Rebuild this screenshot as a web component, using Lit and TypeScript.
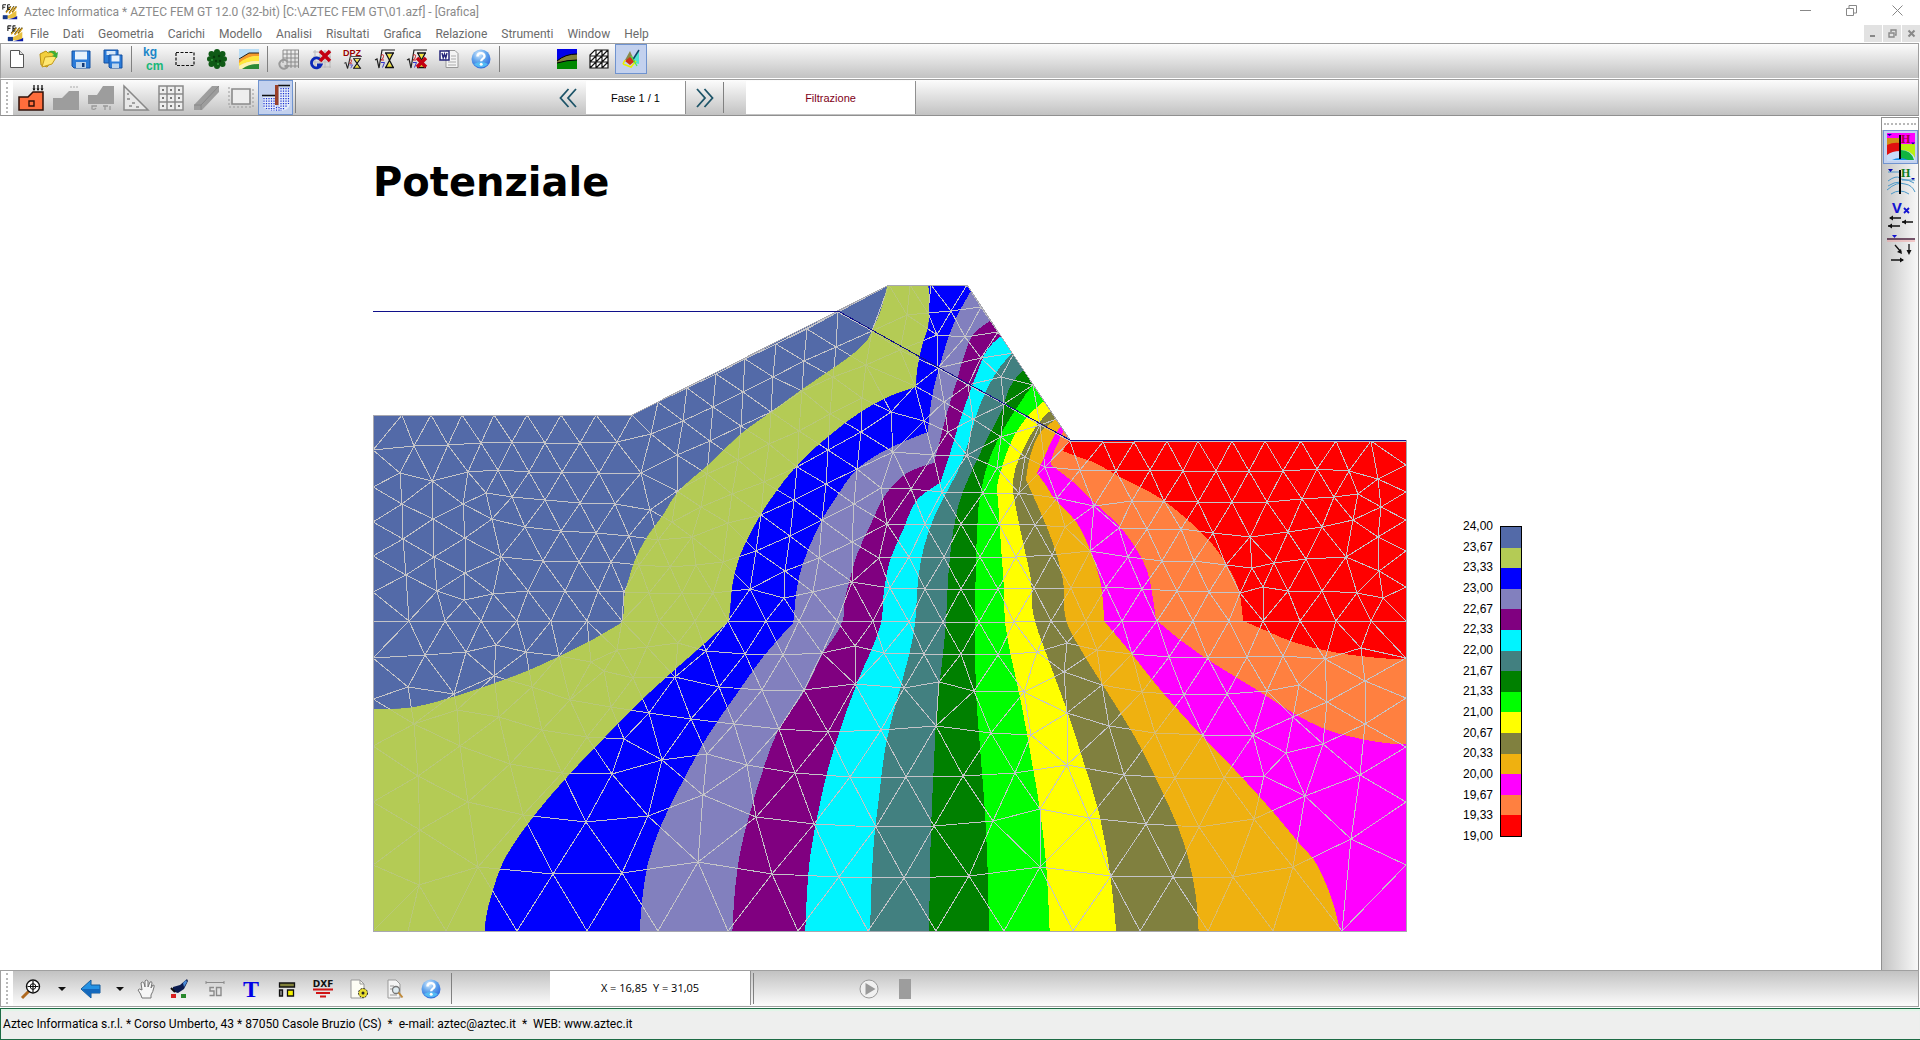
import { LitElement, html, svg, css, TemplateResult } from "lit";
import { customElement, property } from "lit/decorators.js";

type Pt = [number, number];

/* ---------- model data ---------- */

const COLORS = [
  "#536aa8", "#b4cb55", "#0000fe", "#8280be", "#800080", "#00f4ff", "#428080", "#008000",
  "#00ff00", "#ffff00", "#80803f", "#efb110", "#ff00ff", "#ff8040", "#ff0000",
];

const LEVELS = [
  "24,00", "23,67", "23,33", "23,00", "22,67", "22,33", "22,00", "21,67",
  "21,33", "21,00", "20,67", "20,33", "20,00", "19,67", "19,33", "19,00",
];

const DOMAIN: Pt[] = [
  [373, 415], [632, 415], [889, 285], [967, 285], [1070, 440], [1406, 440], [1406, 931], [373, 931],
];

const pairs = (s: string): Pt[] =>
  s.trim().split(/\s+/).map((p) => p.split(",").map(Number) as unknown as Pt);

/* Iso-lines of the potential, from the highest level to the lowest. */
const ISO: Pt[][] = [
  "889,280 887,287 882,307 873,329 866,342 849,357 835,367 804,388 771,412 742,433 708,465 677,493 663,515 647,537 635,560 628,582 625,592 623,618 621,623 592,640 560,656 527,671 495,683 453,697 415,707 392,709 365,709",
  "928,280 928,327 923,342 917,370 916,387 890,396 862,411 830,435 799,463 770,500 752,530 739,558 732,587 729,618 728,622 705,643 650,692 605,737 567,777 533,817 503,862 492,893 486,917 484,940",
  "976,282 971,291 960,310 950,333 940,365 934,387 930,410 928,432 903,442 880,453 854,472 839,493 823,518 808,550 799,577 795,603 794,617 793,623 763,657 738,692 707,737 685,777 662,823 648,863 643,893 639,940",
  "998,317 990,321 973,335 965,353 957,380 947,413 940,440 934,463 907,473 886,494 870,526 856,557 849,583 844,603 843,620 822,655 805,690 777,733 763,770 748,820 740,853 735,890 732,940",
  "1010,332 1000,337 987,350 977,373 967,400 957,430 947,463 940,483 917,500 903,530 890,560 884,590 881,623 857,683 840,730 827,773 818,813 810,857 807,893 805,940",
  "1022,346 1013,353 1000,367 988,387 977,413 967,447 957,473 944,497 933,520 924,547 918,580 916,613 913,637 903,678 892,718 885,750 879,797 874,840 871,897 870,940",
  "1032,362 1023,370 1010,387 1002,410 988,437 977,460 966,484 958,507 951,547 947,597 946,623 942,663 937,707 934,763 931,830 929,940",
  "1043,378 1033,385 1020,403 1003,430 993,450 985,473 979,503 976,563 975,623 976,693 980,747 985,813 988,880 989,940",
  "1052,394 1043,402 1027,417 1012,440 1002,467 997,487 998,500 1001,547 1004,590 1005,623 1014,670 1022,707 1031,757 1040,810 1046,863 1050,940",
  "1058,404 1049,412 1037,425 1023,450 1015,470 1013,490 1015,503 1024,547 1031,580 1033,613 1046,653 1067,710 1083,760 1099,813 1110,873 1117,940",
  "1064,413 1055,420 1040,433 1030,457 1026,480 1036,502 1053,543 1063,580 1066,620 1081,650 1106,690 1135,737 1160,787 1178,827 1188,857 1196,897 1199,940",
  "1067,420 1060,427 1052,440 1043,460 1037,473 1047,487 1053,497 1077,523 1090,550 1100,580 1103,602 1104,621 1131,653 1163,693 1203,737 1235,770 1274,813 1299,843 1314,860 1323,877 1333,903 1342,940",
  "1069,424 1064,430 1058,443 1052,457 1051,465 1073,482 1095,503 1120,527 1135,547 1147,570 1152,593 1156,620 1183,642 1213,663 1257,690 1293,713 1327,730 1357,738 1385,743 1420,745",
  "1072,436 1066,445 1063,451 1073,455 1093,462 1108,470 1120,477 1160,498 1190,522 1213,545 1228,567 1238,587 1242,610 1243,621 1260,628 1293,642 1333,652 1360,656 1393,659 1420,659",
].map(pairs);

const SHEETS: { at: Pt; scale: Pt; nodes: string }[] = [
  {
    at: [360, 270], scale: [2.904, 3],
    nodes: `38,436 123,436 207,436 297,436 389,436 485,436 585,436 684,436 790,436
      865,397 951,353 1034,312 1117,268 1207,222 1297,176 1389,126 1535,46
      38,541 157,528 255,526 350,520 440,516 536,518 638,520 745,516 846,492 937,453 1026,410 1113,367 1200,321 1290,273 1383,230 1488,182
      38,650 116,609 210,632 313,606 400,600 490,605 588,607 693,609 816,610 921,556 1015,512 1107,468 1193,425 1283,362 1375,320 1469,285
      38,757 123,702 298,703 365,668 440,680 536,690 639,698 740,703 843,719 920,662 1007,612 1097,570 1187,523 1275,483 1365,432 1458,385
      905,757 991,712 1080,672 1172,635 1270,590 1360,540 1454,487 1541,427
      1165,735 1260,690 1352,643 1443,597 1549,546 1249,798 1343,750 1434,703 1514,654
      1151,842 1235,903 1333,865 1430,815 1529,762 1132,957 1230,985 1315,967 1428,937 1508,865
      212,748 382,748 480,770 585,782 684,790 782,797 866,810 965,800 1070,760
      38,858 126,806 305,803 410,860 530,872 635,875 728,875 810,885 900,890 975,885 1055,875
      38,965 133,914 215,860 225,963 305,910 303,990 385,973 487,964 594,964 690,962 766,965 840,968 935,970 1025,970
      38,1054 143,1054 248,1054 350,1054 455,1054 556,1054 660,1054 762,1054 868,1054 972,1054 1069,1054 1180,1054 1276,1054 1386,1054 1490,1054`,
  },
  {
    at: [860, 270], scale: [3, 3],
    nodes: `150,46 213,46 322,46 363,112 413,185 462,250 520,345 590,448 631,512
      272,122 140,135 205,128 230,196 315,200 120,240 235,293 362,265 325,345 165,348
      422,322 433,402 340,448 253,397 192,452 91,425 3,488 265,485 422,500 322,556 220,555 100,548
      65,652 152,658 245,666 370,668 412,595 478,668 495,562 540,465 555,590 660,600 768,603 728,515 822,515`,
  },
  {
    at: [1040, 420], scale: [3, 3],
    nodes: `187,62 280,62 380,62 475,62 576,62 676,62 782,62 887,62 993,62 1098,62
      14,140 123,150 228,155 329,150 428,152 528,153 628,153 730,152 832,148 928,152 1015,177 1098,135 1098,215
      955,223 882,230 785,238 682,246 577,247 475,245 372,243 275,243 163,258 50,235
      1022,260 1098,300 940,300 845,322 743,335 630,352 520,338 422,328 322,328 237,323 75,320
      1015,350 1098,392 918,410 798,417 703,428 636,445 558,435 463,424 366,424 263,412 150,392 37,405
      1018,452 1098,500 1030,535 950,520 845,512 745,512 670,502 600,518 508,515 410,512 305,508 198,502 93,505
      32,604 137,604 246,604 352,604 458,604 568,604 670,604 780,604 887,604 993,604 1098,604
      80,670 170,690 275,703 388,710 505,715 620,712 730,707 854,717 962,685 1098,713
      974,783 862,847 776,795 680,813 560,823 432,825 305,815 187,795 72,757
      82,880 208,918 345,940 490,945 638,945 758,890 974,912 1098,835`,
  },
  {
    at: [860, 480], scale: [2.8, 3],
    nodes: `74,130 183,132 284,133 390,133 490,135 575,135 52,235 137,230 236,230 335,230 437,230 535,228 643,212
      85,323 183,328 284,328 386,328 487,325 587,322 690,322
      35,425 137,425 233,425 333,425 432,425 534,425 630,425 732,425
      68,518 178,522 284,522 386,525 495,515 578,490 122,625 222,605 320,632 458,635 572,577 680,610 790,632
      58,750 213,737 367,758 480,765 580,695 700,740 830,765 963,765 1100,767 1193,820 1295,793 1212,715 1415,735
      1530,800 1400,885 1530,965 1245,948 1130,888 1020,895 882,895 738,885 580,855 433,878 288,887 130,892
      45,1042 208,1037 372,1022 505,988 640,1015 800,1032 950,1040 1103,1018 1375,1077 1530,1155 1212,1160
      1045,1190 875,1192 703,1187 503,1160 304,1187 122,1195
      23,1353 212,1353 402,1353 597,1353 785,1353 975,1353 1155,1353 1350,1353 1529,1353`,
  },
  {
    at: [360, 600], scale: [3, 3],
    nodes: `40,175 40,297 40,437 40,605 40,795 40,993
      195,165 317,155 408,135 497,155 598,168 693,185 770,150 862,140 955,130 1037,153 1155,163 1270,165 1387,158 1485,137
      143,260 282,282 403,228 515,262 630,300 732,213 820,235 946,232 1078,260 1205,270 1333,270 1485,253
      163,372 290,330 418,350 547,390 680,412 752,322 868,340 993,357 1123,373 1258,388 1405,395
      300,437 450,493 793,418 907,480 1042,462 1160,495 1305,520 1470,532 757,523 605,520
      175,527 325,605 490,645 678,665 865,647 1030,585 1187,650 1362,672 1545,682
      180,690 355,800 578,822 785,820 1015,787 1235,822 1437,832 178,855
      145,993 258,993 470,993 682,993 895,993 1105,993 1315,993`,
  },
];

/* ---------- geometry ---------- */

function collectNodes(): Pt[] {
  const out: Pt[] = [];
  for (const s of SHEETS) {
    for (const [u, v] of pairs(s.nodes)) {
      const p: Pt = [Math.round(s.at[0] + u / s.scale[0]), Math.round(s.at[1] + v / s.scale[1])];
      if (!out.some((q) => Math.hypot(q[0] - p[0], q[1] - p[1]) < 9)) out.push(p);
    }
  }
  return out;
}

function inside(p: Pt, poly: Pt[]): boolean {
  let hit = false;
  for (let i = 0, j = poly.length - 1; i < poly.length; j = i++) {
    const [xi, yi] = poly[i];
    const [xj, yj] = poly[j];
    if (yi > p[1] !== yj > p[1] && p[0] < ((xj - xi) * (p[1] - yi)) / (yj - yi) + xi) hit = !hit;
  }
  return hit;
}

interface Tri { a: number; b: number; c: number; x: number; y: number; r: number; }

/* Incremental Delaunay triangulation; returns the unique edges inside the domain. */
function meshPath(nodes: Pt[]): string {
  const pts: Pt[] = [...nodes, [-20000, -15000], [22000, -15000], [900, 30000]];
  const n = nodes.length;
  const make = (a: number, b: number, c: number): Tri | null => {
    const [ax, ay] = pts[a], [bx, by] = pts[b], [cx, cy] = pts[c];
    const d = 2 * (ax * (by - cy) + bx * (cy - ay) + cx * (ay - by));
    if (Math.abs(d) < 1e-9) return null;
    const a2 = ax * ax + ay * ay, b2 = bx * bx + by * by, c2 = cx * cx + cy * cy;
    const x = (a2 * (by - cy) + b2 * (cy - ay) + c2 * (ay - by)) / d;
    const y = (a2 * (cx - bx) + b2 * (ax - cx) + c2 * (bx - ax)) / d;
    return { a, b, c, x, y, r: (ax - x) ** 2 + (ay - y) ** 2 };
  };
  let tris: Tri[] = [make(n, n + 1, n + 2)!];
  for (let i = 0; i < n; i++) {
    const [px, py] = pts[i];
    const edges = new Map<string, [number, number, number]>();
    const keep: Tri[] = [];
    for (const t of tris) {
      if ((px - t.x) ** 2 + (py - t.y) ** 2 < t.r - 1e-6) {
        for (const [u, v] of [[t.a, t.b], [t.b, t.c], [t.c, t.a]]) {
          const k = u < v ? `${u}_${v}` : `${v}_${u}`;
          const e = edges.get(k);
          if (e) e[2]++;
          else edges.set(k, [u, v, 1]);
        }
      } else keep.push(t);
    }
    edges.forEach(([u, v, c]) => {
      if (c === 1) {
        const t = make(u, v, i);
        if (t) keep.push(t);
      }
    });
    tris = keep;
  }
  const seen = new Set<string>();
  let d = "";
  for (const t of tris) {
    if (t.a >= n || t.b >= n || t.c >= n) continue;
    const c: Pt = [
      (pts[t.a][0] + pts[t.b][0] + pts[t.c][0]) / 3,
      (pts[t.a][1] + pts[t.b][1] + pts[t.c][1]) / 3,
    ];
    if (!inside(c, DOMAIN)) continue;
    for (const [u, v] of [[t.a, t.b], [t.b, t.c], [t.c, t.a]]) {
      const k = u < v ? `${u}_${v}` : `${v}_${u}`;
      if (seen.has(k)) continue;
      seen.add(k);
      d += `M${pts[u].join(" ")}L${pts[v].join(" ")}`;
    }
  }
  return d;
}

/* Smooth curve through the points; sharp corners stay sharp. */
function curve(p: Pt[], start: "M" | "L"): string {
  const tangent = p.map((q, i): Pt => {
    if (i === 0 || i === p.length - 1) return [0, 0];
    const a: Pt = [q[0] - p[i - 1][0], q[1] - p[i - 1][1]];
    const b: Pt = [p[i + 1][0] - q[0], p[i + 1][1] - q[1]];
    const la = Math.hypot(...a), lb = Math.hypot(...b);
    const cos = (a[0] * b[0] + a[1] * b[1]) / (la * lb);
    if (cos < 0.86) return [0, 0];
    const w: Pt = [a[0] / la + b[0] / lb, a[1] / la + b[1] / lb];
    const lw = Math.hypot(...w);
    return [w[0] / lw, w[1] / lw];
  });
  let d = `${start}${p[0].join(" ")}`;
  for (let i = 1; i < p.length; i++) {
    const k = Math.hypot(p[i][0] - p[i - 1][0], p[i][1] - p[i - 1][1]) / 3;
    const c = [
      p[i - 1][0] + tangent[i - 1][0] * k, p[i - 1][1] + tangent[i - 1][1] * k,
      p[i][0] - tangent[i][0] * k, p[i][1] - tangent[i][1] * k,
    ].map((v) => v.toFixed(1));
    d += `C${c.join(" ")} ${p[i].join(" ")}`;
  }
  return d;
}

const MESH = meshPath(collectNodes());
const DOMAIN_POINTS = DOMAIN.map((q) => q.join(",")).join(" ");
const downstream = (i: number): string => {
  const line = ISO[i];
  const tail = i === 0 ? "L365 945L1450 945" : `L1450 ${line[line.length - 1][1]}`;
  return `${curve(line, "M")}${tail}L1450 270Z`;
};
const band = (i: number): string =>
  `${curve(ISO[i - 1], "M")}${i === 1 ? "L365 940" : ""}${curve([...ISO[i]].reverse(), "L")}Z`;

/* ---------- icons ---------- */

const helpIcon = svg`
  <defs><radialGradient id="hb" cx=".4" cy=".25" r=".8"><stop offset="0" stop-color="#d6ecff"/><stop offset=".5" stop-color="#5fa3ec"/><stop offset="1" stop-color="#2a62d8"/></radialGradient></defs>
  <circle cx="10" cy="10" r="9.5" fill="url(#hb)"/><path d="M3 15a9 9 0 0 0 14 0q-7-4-14 0z" fill="#58c8f8" opacity=".8"/>
  <path d="M6.500 7.500C6.500 3 13.500 3 13.500 7.300C13.500 9.800 10.200 9.500 10.200 12.300" fill="none" stroke="#fff" stroke-width="2.400"/><circle cx="10.200" cy="15.300" r="1.500" fill="#fff"/>`;

const sqrtGlass = svg`
  <path d="M0 11l2-1 2 9L7 1h13" fill="none" stroke="#222" stroke-width="1.200"/>
  <path d="M12 5h5l-2.500 5zM11.500 18h6l-3-5z" fill="#efe23a"/>
  <path d="M10 4h9M10 18.500h9M11 4.500l7 13.500M18 4.500L11 18" stroke="#111" stroke-width="1.300" fill="none"/>
  <path d="M6 6.500q3-2 2.500 1T6 11h3" fill="none" stroke="#c22" stroke-width="1"/><path d="M6 13.500h3.500l-2 5" fill="none" stroke="#33c" stroke-width="1"/>`;

const redX = svg`<path d="M9 2l10 10M19 2L9 12" stroke="#c40010" stroke-width="3.500" fill="none"/>`;

const ICONS: Record<string, TemplateResult> = {
  app: svg`<path d="M1 16q8-1 17-8v10H1z" fill="#e8c040"/><path d="M5 10L11 3M9 11L15 3M13 10L18 3" stroke="#3a3008" stroke-width="1.600"/><path d="M5 11L11 4M9 12L15 4M13 11L18 4" stroke="#e0a820" stroke-width="1.400"/>
    <path d="M7 19q8-1 12-4v4z" fill="#0a1aa8"/><path d="M1 19v-5h6v5z" fill="#183a8a"/><path d="M1 1v6M1 1h4M1 4h3M7 1v6M7 1h3M7 4h2M7 7h3" stroke="#222" stroke-width="1.300" fill="none"/>`,
  fresh: svg`<path d="M3.500 1.500h9l4 4v13h-13z" fill="#fff" stroke="#555"/><path d="M12.500 1.500v4h4" fill="#ddd" stroke="#555"/>`,
  open: svg`<path d="M1 5l6-3 2 2 7-2 1 5-9 11-6-2z" fill="#f3cf3c" stroke="#b98f12"/><path d="M6 8l12-1-5 8-10 3z" fill="#ffe873" stroke="#c39a1c"/><path d="M9 3q5-3 8 1l2-1-1 6-5-2 2-1q-2-3-6-3z" fill="#3fae36"/>`,
  save: svg`<path d="M1 2h18v17H3l-2-2z" fill="#2b7bd8" stroke="#1550a0"/><path d="M4 2.500h12v8H4z" fill="#e8f2fc"/><path d="M5 13h10v6H5z" fill="#bcd4ec"/><path d="M11 14h2.500v4H11z" fill="#123a78"/>`,
  saveAll: svg`<path d="M1 1h14v13H1z" fill="#2b7bd8" stroke="#1550a0"/><path d="M3.500 2h9v4h-9z" fill="#d8e8f8"/><path d="M6 6h13v13H7l-1-1z" fill="#2b7bd8" stroke="#1550a0"/><path d="M8.500 6.500h8v6h-8z" fill="#e8f2fc"/><path d="M9 14.500h7V19H9z" fill="#bcd4ec"/>`,
  units: svg`<text x="0" y="7" font-size="12" font-weight="700" font-family="Liberation Sans" fill="#1c86c8">kg</text><text x="3" y="21" font-size="12" font-weight="700" font-family="Liberation Sans" fill="#18b878">cm</text>`,
  select: svg`<path d="M1 3.500h18v13H1z" fill="none" stroke="#111" stroke-dasharray="3 1.500" stroke-width="1.200"/>`,
  tree: svg`<g fill="#0f5a16"><circle cx="10" cy="10" r="7"/><circle cx="10" cy="3" r="3"/><circle cx="4.500" cy="5" r="3"/><circle cx="15.500" cy="5" r="3"/><circle cx="2.800" cy="10" r="2.800"/><circle cx="17.200" cy="10" r="2.800"/><circle cx="4.500" cy="15" r="3"/><circle cx="15.500" cy="15" r="3"/><circle cx="10" cy="17" r="3"/></g><g fill="#083a0c"><circle cx="7" cy="8" r="1.200"/><circle cx="12" cy="7" r="1.200"/><circle cx="9" cy="12" r="1.200"/><circle cx="13" cy="12" r="1.200"/></g><circle cx="5" cy="11" r="1" fill="#38a040"/><circle cx="11" cy="15" r="1" fill="#38a040"/>`,
  strata: svg`<path d="M0 0h20v5H9L0 11z" fill="#b8dcf4"/><path d="M0 11l5-4 5-3h10v3q-10-1-20 8z" fill="#f49a2c"/><path d="M0 14Q9 6 20 7v5Q8 12 0 17z" fill="#ffe63c"/><path d="M0 17q8-5 20-5v3q-10 0-16 5H0z" fill="#fff2b0"/><path d="M3 20q7-5 17-5v5z" fill="#2c8a34"/><path d="M0 10l5-3 5-3h10" stroke="#222" fill="none"/>`,
  gridOff: svg`<path d="M4 1v13M8 1v18M12 1v18M16 1v18M19.500 1v18M4 1h16M4 5h16M4 9h16M8 13h12M8 17h12" stroke="#8a8a8a" fill="none"/><path d="M8.500 12.500A4.500 4.500 0 1 0 9 17H5.500" stroke="#999" stroke-width="2" fill="none"/>`,
  gridDel: svg`<path d="M4 1v18M9 1v18M14 1v18M19 1v18M2 3h18M2 8h18M2 13h18M2 18h18" stroke="#bbb" fill="none"/><path d="M9.500 11A5 5 0 1 0 10 16H6" stroke="#0a28b8" stroke-width="2.800" fill="none"/>${redX}`,
  dpz: svg`<text x="0" y="6.500" font-size="9" font-weight="700" font-family="Liberation Sans" fill="#900">DPZ</text><g transform="translate(1 7) scale(.9 .66)">${sqrtGlass}</g>`,
  sqrt: sqrtGlass,
  sqrtDel: svg`${sqrtGlass}<path d="M10 9l9 9M19 9l-9 9" stroke="#c40010" stroke-width="3.500"/>`,
  word: svg`<path d="M7 1.500h9l3 3v14H7z" fill="#f4f4f4" stroke="#999"/><path d="M12 7h5M12 10h5M9 13h8M9 16h8" stroke="#aaa"/><path d="M1 2h9v9H1z" fill="#fff" stroke="#24247a" stroke-width="1.500"/><path d="M3 4l1.200 5L5.500 5l1.300 4L8 4" stroke="#24247a" stroke-width="1.400" fill="none"/>`,
  help: helpIcon,
  layers: svg`<path d="M0 0h20v20H0z" fill="#0000e8"/><path d="M0 12Q8 5 20 5v6Q10 11 0 14z" fill="#80803a"/><path d="M0 14q10-3 20-3v9H0z" fill="#008800"/><path d="M0 12Q8 5 20 5M0 14q10-3 20-3" stroke="#000" fill="none"/>`,
  mesh: svg`<path d="M6 1h13v18H1V6z" fill="#fff"/><path d="M6 1h13v18H1V6zM7 1v18M13 1v18M1 7h18M1 13h18M1 13l6-6 6-6M1 19l6-6 6-6 6-6M7 19l6-6 6-6M13 19l6-6" fill="none" stroke="#111" stroke-width="1.200"/>`,
  results: svg`<path d="M9 2l4 9H4z" fill="#8a8a4a"/><path d="M18 1L9 13l9 2z" fill="#30e8c8" opacity=".8"/><path d="M18 1l-7 11" stroke="#146" stroke-width="1.500"/><path d="M4 12l5-4 5 4-5 4z" fill="#d23018"/><path d="M2 15l8 3 5-6M4 11l-2 4" stroke="#e8f000" stroke-width="1.600" fill="none"/><path d="M10 7l6 10" stroke="#48e848" stroke-width="1.200"/>`,
  loads: svg`<path d="M1 25V12h9l5-5h10v18z" fill="#ff6d3c" stroke="#301008" stroke-width="1.500"/><path d="M11 16h5v5h-5z" fill="none" stroke="#301008" stroke-width="1.400"/><path d="M16 0v5M20 0v5M24 0v5" stroke="#111" stroke-width="1.300"/><path d="M14.500 3.500h3L16 6zM18.500 3.500h3L20 6zM22.500 3.500h3L24 6z" fill="#111"/>`,
  profile: svg`<path d="M0 25V13h9l7-7h10v19z" fill="#9d9d9d"/><path d="M17 2h9" stroke="#aaa" stroke-dasharray="2 1"/>`,
  profile2: svg`<path d="M0 19V10h9l6-9h11v18z" fill="#9d9d9d"/><path d="M9 21H4v3q3 1 4-1M20 21h-5M17 21v4M22 21v4" stroke="#999" fill="none" stroke-width="1.300"/>`,
  wedge: svg`<path d="M1 1l24 24H1z" fill="#e8e8e8" stroke="#888" stroke-width="1.500"/><path d="M4 14h3M9 18h3M6 21h3M13 22h3M4 9h2" stroke="#888" stroke-width="1.500"/>`,
  blocks: svg`<path d="M1 1h24v24H1zM9 1v24M17 1v24M1 9h24M1 17h24" fill="#eee" stroke="#8a8a8a" stroke-width="1.500"/><path d="M4 4h2v2H4zM12 4h2v2h-2zM20 4h2v2h-2zM4 12h2v2H4zM12 12h2v2h-2zM20 12h2v2h-2zM4 20h2v2H4zM12 20h2v2h-2zM20 20h2v2h-2z" fill="#777"/>`,
  beam: svg`<path d="M1 20L19 1h7v6L9 25H1z" fill="#9d9d9d"/><path d="M1 20h7l18-19M8 20v5" stroke="#888" fill="none"/>`,
  frame: svg`<path d="M4 4h18v15H4z" fill="#eee" stroke="#8a8a8a" stroke-width="1.600"/><path d="M1 2v20h24V2" fill="none" stroke="#999" stroke-dasharray="2 2"/>`,
  seepage: svg`<path d="M1 13v10q4 4 12 4h3q10 0 12-6V4H17v19h-3V13z" fill="#e4ecfa"/>
    <path d="M2 14v9M4.500 14v11M7 14v12M9.500 14v13M12 14v13M14.500 23v5M17 23v5M19 4v23M21.500 4v22M24 4v20M26.500 4v16" stroke="#1a2fd0" stroke-width="1.200" stroke-dasharray="1.300 1.200"/>
    <path d="M0 11.500h13M16 1.500h12" stroke="#111" stroke-width="1.600"/><path d="M13 1h3.500v20H13z" fill="#9a4028"/>`,
  zoom: svg`<path d="M1 19l7-7" stroke="#b06a20" stroke-width="3"/><circle cx="12" cy="7.500" r="6.500" fill="#fff" stroke="#111" stroke-width="1.400"/><path d="M12 2v11M6.500 7.500h11" stroke="#111" stroke-width="1.200"/><circle cx="12" cy="7.500" r="2.800" fill="none" stroke="#111"/>`,
  back: svg`<path d="M0 10L10 1v5h9v8h-9v5z" fill="#2492e4" stroke="#155a9a"/><path d="M10 10h9v4h-9v5L1 10z" fill="#1468bc"/>`,
  hand: svg`<path d="M5 19Q4 15 1 11q1-2 4 0L4 4q1-2 3 0l1 4V2q1-2 3 0v6l2-5q2-1 2 1l-1 5 2-3q2 0 1 2-1 5-3 8v3z" fill="#f6f6f6" stroke="#777"/>`,
  redraw: svg`<path d="M4 8l7-2L18 0l1 2-4 8-6 4q-6-1-5-6z" fill="#0c1c50"/><path d="M14 4l3-3 1 2-3 5z" fill="#4a8ad8"/><path d="M2 15h5v4H2z" fill="#d82020"/><path d="M12 15h5v4h-5z" fill="#28882c"/><path d="M2 9l4 4" stroke="#111" stroke-width="2"/>`,
  size50: svg`<path d="M1 3.500h18M1 2v3M19 2v3" stroke="#8a8a8a"/><path d="M9 8.500H5v3.500h4v4.500H4.500M11.500 8.500H16v8h-4.500z" fill="none" stroke="#8a8a8a" stroke-width="1.400"/>`,
  type: svg`<text x="10" y="18" text-anchor="middle" font-size="24" font-weight="700" font-family="Liberation Serif" fill="#0000e6">T</text>`,
  sections: svg`<path d="M2.500 4h15v4h-15z" fill="#80803a" stroke="#111" stroke-width="1.300"/><path d="M2.500 11h3v6h-3z" fill="#888" stroke="#111" stroke-width="1.300"/><path d="M10.500 11h6v6h-6z" fill="#f4f000" stroke="#111" stroke-width="1.300"/>`,
  dxf: svg`<text x="10" y="7.500" text-anchor="middle" font-size="9" font-weight="700" font-family="DejaVu Sans" fill="#111">DXF</text><path d="M0 10.500h20M3 14h14M7 17.500h6" stroke="#d01414" stroke-width="2"/>`,
  page: svg`<path d="M2 1h9l4 4v14H2z" fill="#fdfdf4" stroke="#999"/><path d="M11 1v4h4" fill="none" stroke="#999"/><circle cx="14" cy="14" r="4.500" fill="#e8dc30" stroke="#222" stroke-dasharray="2 1"/><circle cx="14" cy="14" r="1.500" fill="#222"/>`,
  preview: svg`<path d="M3 1h8l4 4v14H3z" fill="#f4f4f4" stroke="#999"/><path d="M5 7h4M5 10h3M5 16h7" stroke="#999"/><circle cx="11" cy="11" r="3.500" fill="#ddeaf0" stroke="#777" stroke-width="1.300"/><path d="M13.500 13.500l4 5" stroke="#c08a3a" stroke-width="2"/>`,
  play: svg`<circle cx="10" cy="10" r="9" fill="#f0f0f0" stroke="#999"/><path d="M6.500 4v12l10-6z" fill="#999"/>`,
  stop: svg`<path d="M4 0h12v20H4z" fill="#9d9d9d"/>`,
  prev: svg`<path d="M9.500 1l-8 9 8 9M17 1l-8 9 8 9" fill="none" stroke="#1d5468" stroke-width="1.800"/>`,
  next: svg`<path d="M3 1l8 9-8 9M10.500 1l8 9-8 9" fill="none" stroke="#1d5468" stroke-width="1.800"/>`,
  fieldH: svg`<path d="M0 0h28v28H0z" fill="#c8dcf8"/><path d="M0 0h28v11H0z" fill="#ff00ff"/><path d="M0 5h13v7Q5 12 0 16z" fill="#d09018"/><path d="M0 12q6-3 13-2v8q-8 0-13 4z" fill="#e01010"/><path d="M14 11h14v14q-4-8-14-8z" fill="#b8f010"/><path d="M14 17q10 0 13 10H14z" fill="#10b440"/><path d="M5 27q8-4 16 0z" fill="#1890e8"/><path d="M13 2v24" stroke="#000" stroke-width="2"/><text x="14" y="10" font-size="12" font-weight="700" font-family="Liberation Serif" fill="#a00040">H</text><path d="M0 1h5L2.500 3zM24 9.500h4l-2 2z" fill="#00a"/>`,
  isoH: svg`<path d="M1 5h12M15 13h13M1 14q8-6 12-3M14 12q9 1 13 4M0 23q10-9 18-6 7 1 10 8M4 27q9-6 18 0M1 19q6-4 12-4" fill="none" stroke="#4a98c8"/><path d="M13 3v24" stroke="#000" stroke-width="2"/><text x="14" y="10" font-size="12" font-weight="700" font-family="Liberation Serif" fill="#0a7a1a">H</text><path d="M1 2h5L3.500 5zM24 11h4l-2 2z" fill="#00a"/>`,
  velX: svg`<text x="5" y="12" font-size="15" font-weight="700" font-family="Open Sans" fill="#1414d0">V</text><path d="M17 7l5 5M22 7l-5 5" stroke="#1414d0" stroke-width="1.800"/><path d="M3 17h11M15 21h11M1 25h12" stroke="#111" stroke-width="1.300"/><path d="M2 17l4-2.500v5zM15 21l4-2.500v5zM1 25l4-2.500v5z" fill="#111"/>`,
  velV: svg`<path d="M5 0h5L7.500 3z" fill="#1414d0"/><path d="M0 4h28" stroke="#401030" stroke-width="1.400"/><path d="M0 6h28" stroke="#f0a0a0"/><path d="M8 10l6 7M22 9v9M4 25h12" stroke="#111" stroke-width="1.300"/><path d="M15 19l-5-2 4-3zM19.500 15h5L22 20zM17 25l-4-2.500v5z" fill="#111"/>`,
};

@customElement("tool-button")
class ToolButton extends LitElement {
  @property() icon = "";
  @property() label = "";
  @property({ type: Number }) size = 20;
  @property({ type: Boolean }) active = false;

  static styles = css`
    :host { display: flex; }
    .btn { display: flex; flex: 1; align-items: center; justify-content: center; margin: 0; padding: 0; border: 1px solid transparent; background: none; }
    .btn.on { border-color: #6f93cf; background: #c3d1ee; }
    .pic { display: block; overflow: visible; }
  `;

  render() {
    return html`<button class="btn ${this.active ? "on" : ""}" aria-label=${this.label} aria-pressed=${this.active}>
      <svg class="pic" width=${this.size} height=${this.size} viewBox="0 0 ${this.size} ${this.size}" aria-hidden="true">${ICONS[this.icon]}</svg>
    </button>`;
  }
}

@customElement("potential-plot")
class PotentialPlot extends LitElement {
  static styles = css`
    :host { display: block; }
    .plot { display: block; width: 100%; height: auto; overflow: visible; }
    .mesh { fill: none; stroke: #c4c4c8; stroke-width: 1; shape-rendering: crispEdges; }
    .water { fill: none; stroke: #10108a; stroke-width: 1; shape-rendering: crispEdges; }
    .edge { fill: none; stroke: #a8a8b0; stroke-width: 1; shape-rendering: crispEdges; }
  `;

  render() {
    return html`<svg class="plot" viewBox="373 285 1034 647" role="img" aria-label="Potenziale">
      <defs><clipPath id="soil"><polygon points=${DOMAIN_POINTS}></polygon></clipPath></defs>
      <g clip-path="url(#soil)">
        <polygon points=${DOMAIN_POINTS} fill=${COLORS[0]}></polygon>
        <g shape-rendering="crispEdges">${ISO.map((_, i) => svg`<path d=${downstream(i)} fill=${COLORS[i + 1]} />`)}</g>
        <path class="mesh" d=${MESH}></path>
        <path d=${band(1)} fill=${COLORS[1]} opacity=".7"></path>
        <path d=${band(11)} fill=${COLORS[11]} opacity=".5"></path>
      </g>
      <polygon class="edge" points=${DOMAIN_POINTS}></polygon>
      <path class="water" d="M373 311.500H839L938 367 1070 440H1406"></path>
    </svg>`;
  }
}

const MENU = ["File", "Dati", "Geometria", "Carichi", "Modello", "Analisi", "Risultati", "Grafica", "Relazione", "Strumenti", "Window", "Help"];

@customElement("app-root")
class AppRoot extends LitElement {
  static styles = css`
    :host { display: flex; flex-direction: column; min-height: 100vh; background: #fff; color: #000; font-family: Roboto, "Open Sans", sans-serif; font-size: 12px; }
    * { box-sizing: border-box; }
    .titlebar { display: flex; align-items: center; height: 24px; padding-left: 2px; gap: 6px; color: #8a8a8a; }
    .caption { flex: 1; margin: 0; font-size: 12px; font-weight: 400; line-height: 24px; white-space: nowrap; }
    .mark { display: block; flex: none; }
    .winctl { display: flex; align-self: flex-start; }
    .winctl button { display: flex; align-items: center; justify-content: center; width: 46px; height: 21px; padding: 0; border: 0; background: none; }
    .menubar { display: flex; align-items: center; height: 19px; padding-left: 7px; }
    .menu { display: flex; flex: 1; gap: 14px; margin: 0; padding: 0 0 0 6px; list-style: none; }
    .menu button { margin: 0; padding: 0; border: 0; background: none; font: inherit; line-height: 18px; color: #6b6b6b; }
    .mdi { display: flex; gap: 1px; }
    .mdi button { display: flex; align-items: center; justify-content: center; width: 18px; height: 17px; padding: 0; border: 0; background: #e2e2e2; }
    .bar { display: flex; align-items: stretch; margin-right: 1px; border: 1px solid #a0a0a0; border-bottom: 0; background: linear-gradient(#fcfcfc, #c2c2c2); }
    .top { height: 36px; border-bottom: 1px solid #fff; padding-bottom: 4px; }
    .phase { height: 37px; border-bottom: 1px solid #909090; }
    .foot { height: 37px; border-bottom: 1px solid #a0a0a0; background: linear-gradient(#c2c2c2, #fcfcfc); }
    .top tool-button { width: 32px; }
    .phase tool-button { width: 35px; }
    .foot tool-button { width: 36px; }
    .foot .narrow { width: 32px; }
    .foot .slim { width: 28px; }
    .foot .drop { display: flex; width: 26px; align-items: center; justify-content: center; padding: 0; border: 0; background: none; }
    .drop::before { content: ""; border: 4px solid transparent; border-top-color: #111; border-bottom: 0; }
    .sep { flex: none; width: 1px; margin: 2px 5px 2px 2px; background: #808080; }
    .grip { flex: none; width: 12px; background: #fff; display: flex; justify-content: center; }
    .grip::before { content: ""; border-left: 2px dotted #b8b8b8; margin: 2px 0; }
    .space { flex: 0 0 46px; }
    .wide { flex: 0 0 250px; }
    .midgap { flex: 0 0 93px; }
    .playgap { flex: 0 0 92px; }
    .field { display: flex; align-items: center; justify-content: center; background: #fff; border-right: 1px solid #909090; font-family: "Liberation Sans", sans-serif; font-size: 11px; line-height: 16px; }
    .phase .field { width: 100px; margin: 1px 0; }
    .phase .kind { width: 170px; margin-left: 17px; color: #800018; }
    .foot .field { width: 201px; margin-bottom: 1px; font-family: "Open Sans", sans-serif; white-space: pre; }
    .body { display: flex; flex: 1; }
    .canvas { flex: 1; min-width: 0; display: grid; grid-template-columns: minmax(0, 373fr) minmax(0, 1034fr) minmax(0, 474fr); grid-template-rows: auto 1fr; row-gap: 79px; padding-top: 42px; }
    .name { grid-column: 2 / 4; margin: 0; font: 700 40px/48px "DejaVu Sans", sans-serif; }
    .draw { grid-column: 2; }
    .legend { grid-column: 3; display: flex; align-items: flex-start; gap: 7px; padding: 233px 0 0 56px; }
    .levels { display: flex; flex-direction: column; justify-content: space-between; height: 326px; margin: 0; padding: 0; list-style: none; font: 12px/16px "Liberation Sans", sans-serif; text-align: right; }
    .scale { display: flex; flex-direction: column; width: 22px; height: 311px; margin-top: 8px; border: 1px solid #000; }
    .swatch { flex: 1; }
    .side { display: flex; flex-direction: column; width: 38px; margin: 1px 1px 0 0; border: 1px solid #909090; border-bottom: 0; background: linear-gradient(90deg, #c4c4c4, #f8f8f8); }
    .side tool-button { height: 34px; margin-left: 1px; }
    .dots { height: 12px; background: #fff; display: flex; align-items: center; padding: 0 2px; }
    .dots::before { content: ""; flex: 1; border-top: 2px dotted #b8b8b8; }
    .status { margin-top: 1px; height: 32px; padding-left: 2px; border: 1px solid #1d6b45; border-right: 0; background: #eeefee; font-size: 12px; line-height: 30px; white-space: pre; box-shadow: inset 0 2px 1px #dff5e6; }
  `;

  private tool(icon: string, label: string, size = 20, active = false, cls = "") {
    return html`<tool-button class=${cls} .icon=${icon} .label=${label} .size=${size} .active=${active}></tool-button>`;
  }

  render() {
    const sep = html`<span class="sep"></span>`;
    return html`
      <header class="titlebar">
        <svg class="mark" width="16" height="16" viewBox="0 0 20 20" aria-hidden="true">${ICONS.app}</svg>
        <h1 class="caption">Aztec Informatica * AZTEC FEM GT 12.0 (32-bit) [C:\\AZTEC FEM GT\\01.azf] - [Grafica]</h1>
        <div class="winctl">
          <button aria-label="Riduci a icona"><svg width="11" height="11"><path d="M0 5.500h11" stroke="#888" /></svg></button>
          <button aria-label="Ripristina"><svg width="11" height="11"><path d="M.5 3.500h7v7h-7zM3 3V.5h7.500V8H8" fill="none" stroke="#888" /></svg></button>
          <button aria-label="Chiudi"><svg width="11" height="11"><path d="M.5.5l10 10M10.500.5l-10 10" stroke="#888" /></svg></button>
        </div>
      </header>
      <nav class="menubar">
        <svg class="mark" width="17" height="17" viewBox="0 0 20 20" aria-hidden="true">${ICONS.app}</svg>
        <ul class="menu">${MENU.map((m) => html`<li><button>${m}</button></li>`)}</ul>
        <div class="mdi">
          <button aria-label="Riduci finestra"><svg width="9" height="9"><path d="M1 7h5" stroke="#888" stroke-width="2" /></svg></button>
          <button aria-label="Ripristina finestra"><svg width="9" height="9"><path d="M1 4h5v4H1zM3 3V1h5v5H7" fill="none" stroke="#888" stroke-width="1.400" /></svg></button>
          <button aria-label="Chiudi finestra"><svg width="9" height="9"><path d="M1.500 1.500l6 6M7.500 1.500l-6 6" stroke="#888" stroke-width="2" /></svg></button>
        </div>
      </nav>

      <div class="bar top">
        ${this.tool("fresh", "Nuovo")}${this.tool("open", "Apri")}${this.tool("save", "Salva")}${this.tool("saveAll", "Salva tutto")}
        ${sep}
        ${this.tool("units", "Unità di misura")}${this.tool("select", "Selezione")}${this.tool("tree", "Ambiente")}${this.tool("strata", "Terreni")}
        ${sep}
        ${this.tool("gridOff", "Genera mesh")}${this.tool("gridDel", "Elimina mesh")}${this.tool("dpz", "Opzioni analisi")}${this.tool("sqrt", "Analisi")}${this.tool("sqrtDel", "Elimina analisi")}${this.tool("word", "Relazione")}${this.tool("help", "Guida")}
        ${sep}
        <span class="space"></span>
        ${this.tool("layers", "Stratigrafia")}${this.tool("mesh", "Mesh")}${this.tool("results", "Risultati", 20, true)}
      </div>

      <div class="bar phase">
        <span class="grip"></span>
        ${this.tool("loads", "Carichi", 26)}${this.tool("profile", "Profilo", 26)}${this.tool("profile2", "Tensioni", 26)}${this.tool("wedge", "Zone", 26)}${this.tool("blocks", "Elementi", 26)}${this.tool("beam", "Travi", 26)}${this.tool("frame", "Vincoli", 26)}${this.tool("seepage", "Filtrazione", 28, true)}
        ${sep}
        <span class="wide"></span>
        ${this.tool("prev", "Fase precedente")}
        <output class="field">Fase 1 / 1</output>
        ${this.tool("next", "Fase successiva")}
        ${sep}
        <output class="field kind">Filtrazione</output>
      </div>

      <div class="body">
        <main class="canvas">
          <h2 class="name">Potenziale</h2>
          <potential-plot class="draw"></potential-plot>
          <div class="legend">
            <ul class="levels">${LEVELS.map((l) => html`<li>${l}</li>`)}</ul>
            <div class="scale">${COLORS.map((c) => html`<span class="swatch" style="background:${c}"></span>`)}</div>
          </div>
        </main>
        <aside class="side">
          <span class="dots"></span>
          ${this.tool("fieldH", "Mappa del potenziale", 28, true)}${this.tool("isoH", "Linee equipotenziali", 28)}${this.tool("velX", "Velocità X", 28)}${this.tool("velV", "Vettori velocità", 28)}
        </aside>
      </div>

      <div class="bar foot">
        <span class="grip"></span>
        ${this.tool("zoom", "Zoom")}<button class="drop" aria-label="Opzioni zoom"></button>
        ${this.tool("back", "Indietro", 20, false, "narrow")}<button class="drop" aria-label="Cronologia viste"></button>
        ${this.tool("hand", "Sposta", 20, false, "slim")}${this.tool("redraw", "Ridisegna")}${this.tool("size50", "Scala")}${this.tool("type", "Testo")}${this.tool("sections", "Sezioni")}${this.tool("dxf", "Esporta DXF")}${this.tool("page", "Imposta pagina")}${this.tool("preview", "Anteprima")}${this.tool("help", "Guida")}
        ${sep}
        <span class="midgap"></span>
        <output class="field">X = 16,85  Y = 31,05</output>
        ${sep}
        <span class="playgap"></span>
        ${this.tool("play", "Avvia")}${this.tool("stop", "Ferma")}
      </div>
      <footer class="status">Aztec Informatica s.r.l. * Corso Umberto, 43 * 87050 Casole Bruzio (CS)  *  e-mail: aztec@aztec.it  *  WEB: www.aztec.it</footer>
    `;
  }
}
